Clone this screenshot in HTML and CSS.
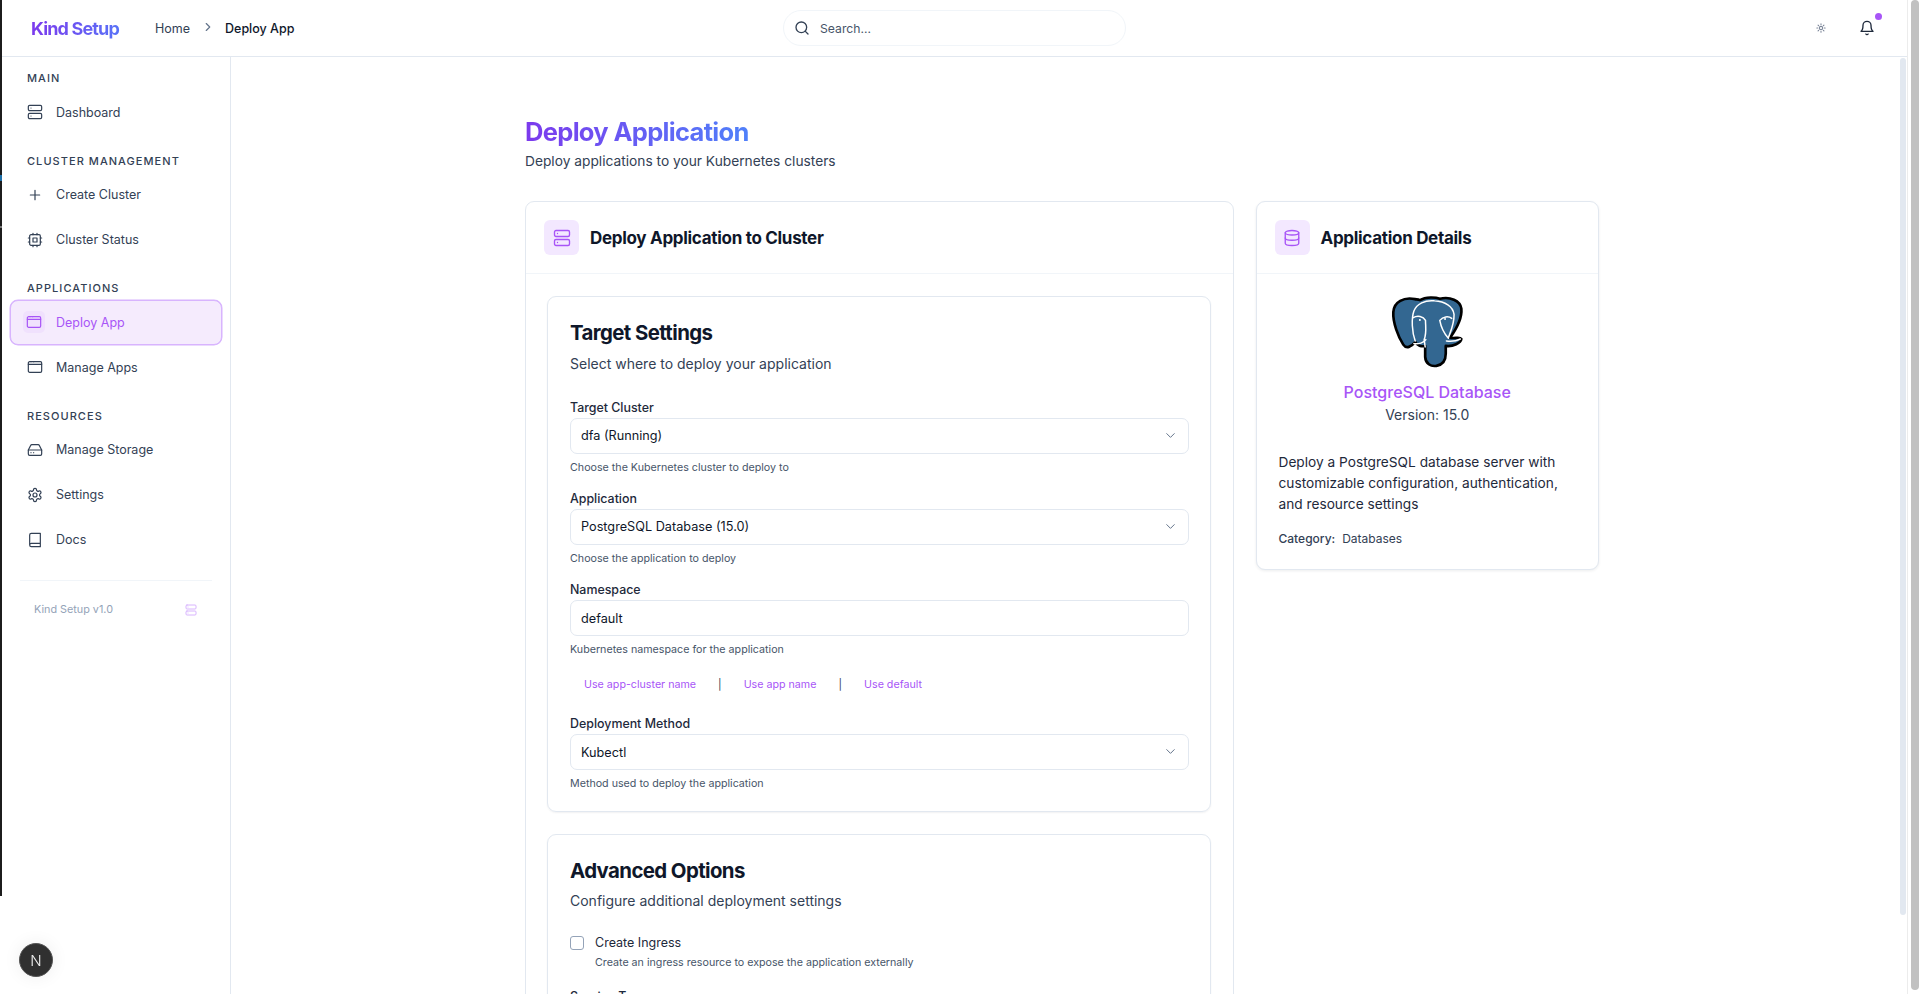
FILE: index.html
```html
<!DOCTYPE html>
<html lang="en">
<head>
<meta charset="utf-8">
<title>Deploy App - Kind Setup</title>
<link rel="stylesheet" href="styles.css">
</head>
<body>
<svg class="sprite" aria-hidden="true">
  <symbol id="i-server" viewBox="0 0 24 24"><rect x="2" y="2" width="20" height="8" rx="2"/><rect x="2" y="14" width="20" height="8" rx="2"/><path d="M6 6h.01M6 18h.01"/></symbol>
  <symbol id="i-plus" viewBox="0 0 24 24"><path d="M5 12h14M12 5v14"/></symbol>
  <symbol id="i-cpu" viewBox="0 0 24 24"><rect x="4" y="4" width="16" height="16" rx="2"/><rect x="9" y="9" width="6" height="6"/><path d="M15 2v2M15 20v2M2 15h2M2 9h2M20 15h2M20 9h2M9 2v2M9 20v2"/></symbol>
  <symbol id="i-window" viewBox="0 0 24 24"><rect x="2" y="4" width="20" height="16" rx="2"/><path d="M2 8h20M6 4v.01M10 4v.01"/></symbol>
  <symbol id="i-drive" viewBox="0 0 24 24"><path d="M22 12H2"/><path d="M5.45 5.11 2 12v6a2 2 0 0 0 2 2h16a2 2 0 0 0 2-2v-6l-3.45-6.89A2 2 0 0 0 16.76 4H7.24a2 2 0 0 0-1.79 1.11z"/><path d="M6 16h.01M10 16h.01"/></symbol>
  <symbol id="i-gear" viewBox="0 0 24 24"><path d="M12.22 2h-.44a2 2 0 0 0-2 2v.18a2 2 0 0 1-1 1.73l-.43.25a2 2 0 0 1-2 0l-.15-.08a2 2 0 0 0-2.73.73l-.22.38a2 2 0 0 0 .73 2.73l.15.1a2 2 0 0 1 1 1.72v.51a2 2 0 0 1-1 1.74l-.15.09a2 2 0 0 0-.73 2.73l.22.38a2 2 0 0 0 2.73.73l.15-.08a2 2 0 0 1 2 0l.43.25a2 2 0 0 1 1 1.73V20a2 2 0 0 0 2 2h.44a2 2 0 0 0 2-2v-.18a2 2 0 0 1 1-1.73l.43-.25a2 2 0 0 1 2 0l.15.08a2 2 0 0 0 2.73-.73l.22-.39a2 2 0 0 0-.73-2.73l-.15-.08a2 2 0 0 1-1-1.74v-.5a2 2 0 0 1 1-1.74l.15-.09a2 2 0 0 0 .73-2.73l-.22-.38a2 2 0 0 0-2.73-.73l-.15.08a2 2 0 0 1-2 0l-.43-.25a2 2 0 0 1-1-1.73V4a2 2 0 0 0-2-2z"/><circle cx="12" cy="12" r="3"/></symbol>
  <symbol id="i-book" viewBox="0 0 24 24"><path d="M4 19.5v-15A2.5 2.5 0 0 1 6.5 2H20v20H6.5a2.5 2.5 0 0 1 0-5H20"/></symbol>
  <symbol id="i-db" viewBox="0 0 24 24"><ellipse cx="12" cy="5" rx="9" ry="3"/><path d="M3 5V19A9 3 0 0 0 21 19V5"/><path d="M3 12A9 3 0 0 0 21 12"/></symbol>
  <symbol id="i-search" viewBox="0 0 24 24"><circle cx="11" cy="11" r="8"/><path d="m21 21-4.3-4.3"/></symbol>
  <symbol id="i-down" viewBox="0 0 24 24"><path d="m6 9 6 6 6-6"/></symbol>
  <symbol id="i-right" viewBox="0 0 24 24"><path d="m9 18 6-6-6-6"/></symbol>
  <symbol id="i-bell" viewBox="0 0 24 24"><path d="M6 8a6 6 0 0 1 12 0c0 7 3 9 3 9H3s3-2 3-9"/><path d="M10.3 21a1.94 1.94 0 0 0 3.4 0"/></symbol>
  <symbol id="i-sun" viewBox="0 0 24 24"><circle cx="12" cy="12" r="4"/><path d="M12 2v2M12 20v2M4.93 4.93l1.41 1.41M17.66 17.66l1.41 1.41M2 12h2M20 12h2M6.34 17.66l-1.41 1.41M19.07 4.93l-1.41 1.41"/></symbol>
</svg>

<div class="desk-strip"></div>

<div class="app">
  <header class="topbar">
    <a class="brand">Kind Setup</a>
    <nav class="crumbs">
      <span class="crumb">Home</span>
      <svg class="ico crumb-sep"><use href="#i-right"/></svg>
      <span class="crumb crumb-current">Deploy App</span>
    </nav>
    <label class="search">
      <svg class="ico search-ico"><use href="#i-search"/></svg>
      <input class="search-input" type="text" placeholder="Search...">
    </label>
    <div class="top-actions">
      <svg class="ico sun"><use href="#i-sun"/></svg>
      <span class="bell-wrap">
        <svg class="ico bell"><use href="#i-bell"/></svg>
        <span class="bell-dot"></span>
      </span>
    </div>
  </header>

  <div class="workspace">
    <aside class="sidebar">
      <h4 class="side-title side-title-first">MAIN</h4>
      <a class="side-item"><svg class="ico side-ico"><use href="#i-server"/></svg>Dashboard</a>
      <h4 class="side-title">CLUSTER MANAGEMENT</h4>
      <a class="side-item"><svg class="ico side-ico"><use href="#i-plus"/></svg>Create Cluster</a>
      <a class="side-item"><svg class="ico side-ico"><use href="#i-cpu"/></svg>Cluster Status</a>
      <h4 class="side-title">APPLICATIONS</h4>
      <a class="side-item side-item-active"><span class="side-ico-box"><svg class="ico side-ico"><use href="#i-window"/></svg></span>Deploy App</a>
      <a class="side-item"><svg class="ico side-ico"><use href="#i-window"/></svg>Manage Apps</a>
      <h4 class="side-title">RESOURCES</h4>
      <a class="side-item"><svg class="ico side-ico"><use href="#i-drive"/></svg>Manage Storage</a>
      <a class="side-item"><svg class="ico side-ico"><use href="#i-gear"/></svg>Settings</a>
      <a class="side-item"><svg class="ico side-ico"><use href="#i-book"/></svg>Docs</a>
      <div class="side-foot">
        <span>Kind Setup v1.0</span>
        <svg class="ico foot-ico"><use href="#i-server"/></svg>
      </div>
    </aside>

    <main class="main">
      <div class="content">
        <h1 class="page-title">Deploy Application</h1>
        <p class="page-sub">Deploy applications to your Kubernetes clusters</p>
        <div class="columns">
          <section class="card card-form">
            <div class="card-head">
              <span class="head-ico"><svg class="ico"><use href="#i-server"/></svg></span>
              <h2 class="card-title">Deploy Application to Cluster</h2>
            </div>
            <div class="card-body">
              <div class="panel">
                <h3 class="panel-title">Target Settings</h3>
                <p class="panel-sub">Select where to deploy your application</p>
                <div class="field">
                  <label class="label">Target Cluster</label>
                  <div class="select-wrap">
                    <select class="control"><option>dfa (Running)</option></select>
                    <svg class="ico select-ico"><use href="#i-down"/></svg>
                  </div>
                  <p class="hint">Choose the Kubernetes cluster to deploy to</p>
                </div>
                <div class="field">
                  <label class="label">Application</label>
                  <div class="select-wrap">
                    <select class="control"><option>PostgreSQL Database (15.0)</option></select>
                    <svg class="ico select-ico"><use href="#i-down"/></svg>
                  </div>
                  <p class="hint">Choose the application to deploy</p>
                </div>
                <div class="field field-links">
                  <label class="label">Namespace</label>
                  <input class="control" type="text" value="default">
                  <p class="hint">Kubernetes namespace for the application</p>
                  <div class="quick-links">
                    <a class="quick">Use app-cluster name</a>
                    <span class="quick-sep">|</span>
                    <a class="quick">Use app name</a>
                    <span class="quick-sep">|</span>
                    <a class="quick">Use default</a>
                  </div>
                </div>
                <div class="field field-last">
                  <label class="label">Deployment Method</label>
                  <div class="select-wrap">
                    <select class="control"><option>Kubectl</option></select>
                    <svg class="ico select-ico"><use href="#i-down"/></svg>
                  </div>
                  <p class="hint">Method used to deploy the application</p>
                </div>
              </div>
              <div class="panel panel-advanced">
                <h3 class="panel-title">Advanced Options</h3>
                <p class="panel-sub">Configure additional deployment settings</p>
                <div class="check-row">
                  <input class="check" type="checkbox">
                  <div>
                    <div class="check-label">Create Ingress</div>
                    <p class="check-hint">Create an ingress resource to expose the application externally</p>
                  </div>
                </div>
                <label class="label label-service">Service Type</label>
              </div>
            </div>
          </section>

          <section class="card card-details">
            <div class="card-head">
              <span class="head-ico"><svg class="ico"><use href="#i-db"/></svg></span>
              <h2 class="card-title">Application Details</h2>
            </div>
            <div class="details-body">
              <svg class="pg-logo" viewBox="450 314 226 222" role="img" aria-label="PostgreSQL">
                <path class="pg-shape" d="M525 326C492 319 462 334 460 365C458 396 475 440 490 463C499 477 514 470 526 455C532 466 545 470 556 467L556 500C557 520 573 530 590 527C609 524 618 511 618 490L618 467C640 470 664 458 665 446C660 438 645 446 631 442C648 418 668 386 665 355C662 330 630 317 600 325C588 320 558 318 540 329C535 327 530 327 525 326Z"/>
                <path class="pg-line" d="M526 452C516 425 514 385 522 362C530 340 556 328 584 331C616 333 640 348 643 372C644 398 634 420 626 442"/>
                <path class="pg-line" d="M522 460C536 462 552 458 558 448M620 452C634 454 650 452 662 446"/>
                <path class="pg-line" d="M520 382C533 374 550 378 557 390C557 410 561 428 553 448L556 470M600 390C610 378 626 376 636 384M600 390C604 412 612 428 626 444"/>
                <circle class="pg-eye" cx="540" cy="389" r="3"/>
                <circle class="pg-eye" cx="616" cy="386" r="3"/>
              </svg>
              <h3 class="app-name">PostgreSQL Database</h3>
              <p class="app-version">Version: 15.0</p>
              <p class="app-desc">Deploy a PostgreSQL database server with customizable configuration, authentication, and resource settings</p>
              <p class="app-cat"><span class="cat-key">Category:</span>Databases</p>
            </div>
          </section>
        </div>
      </div>
    </main>

    <div class="inner-scroll"><span class="inner-thumb"></span></div>
  </div>
</div>

<div class="page-scroll"><span class="page-thumb"></span></div>

<button class="next-badge" type="button">N</button>
</body>
</html>
```

FILE: styles.css
```css
* { box-sizing: border-box; }

html, body { height: 100%; }

body {
  margin: 0;
  height: 994px;
  display: flex;
  overflow: hidden;
  background: #fff;
  color: #0f172a;
  font-family: Inter, "Liberation Sans", sans-serif;
}

h1, h2, h3, h4, p { margin: 0; }

.sprite { display: none; }

.ico {
  display: block;
  width: 16px;
  height: 16px;
  fill: none;
  stroke: currentColor;
  stroke-width: 2;
  stroke-linecap: round;
  stroke-linejoin: round;
  flex: none;
}

.desk-strip {
  width: 2px;
  height: 896px;
  flex: none;
  background: linear-gradient(#1c1c1c 0 175px, #1d6fa8 175px 181px, #1c1c1c 181px 226px, #777 226px 228px, #1c1c1c 228px);
}

.app {
  flex: 1;
  min-width: 0;
  display: flex;
  flex-direction: column;
}

/* top bar */
.topbar {
  height: 57px;
  flex: none;
  display: flex;
  align-items: center;
  border-bottom: 1px solid #e2e8f0;
  padding-left: 29px;
  position: relative;
}

.brand {
  width: 124px;
  font-size: 18px;
  font-weight: 650;
  letter-spacing: -0.85px;
  background: linear-gradient(90deg, #7c3aed, #4f80fa 90%);
  -webkit-background-clip: text;
  background-clip: text;
  color: transparent;
}

.crumbs {
  display: flex;
  align-items: center;
  font-size: 12.5px;
  color: #334155;
  width: 628px;
}

.crumb-sep {
  width: 14px;
  height: 14px;
  margin: -2px 10px 0 11px;
  color: #64748b;
}

.crumb-current {
  color: #0f172a;
  font-weight: 450;
}

.search {
  width: 343px;
  height: 36px;
  flex: none;
  display: flex;
  align-items: center;
  gap: 10px;
  padding-left: 10px;
  border: 1px solid #f1f5f9;
  border-radius: 18px;
}

.search-ico {
  width: 16px;
  height: 16px;
  color: #334155;
}

.search-input {
  flex: 1;
  min-width: 0;
  border: 0;
  outline: 0;
  padding: 0;
  background: none;
  font: 400 12.2px Inter, "Liberation Sans", sans-serif;
}

.search-input::placeholder { color: #475569; opacity: 1; }

.top-actions {
  flex: 1;
  display: flex;
  align-items: center;
  justify-content: flex-end;
  gap: 33px;
  padding-right: 32px;
}

.sun {
  width: 10px;
  height: 10px;
  color: #7c8699;
  stroke-width: 2.6;
}

.bell-wrap { position: relative; display: block; }

.bell { color: #1e293b; }

.bell-dot {
  position: absolute;
  top: -7px;
  right: -7px;
  width: 7px;
  height: 7px;
  border-radius: 50%;
  background: #a855f7;
}

/* workspace */
.workspace {
  flex: 1;
  min-height: 0;
  display: flex;
}

.sidebar {
  width: 229px;
  flex: none;
  border-right: 1px solid #e2e8f0;
  padding: 0 8px;
  font-size: 12.5px;
}

.side-title {
  height: 14px;
  margin: 19px 0 4.5px;
  padding-left: 17px;
  font-size: 11px;
  line-height: 14px;
  font-weight: 550;
  letter-spacing: 1.05px;
  color: #334155;
}

.side-title-first { margin-top: 14px; }

.side-item {
  height: 45px;
  display: flex;
  align-items: center;
  gap: 13px;
  padding-left: 17px;
  color: #334155;
  font-weight: 400;
}

.side-ico { width: 16px; height: 16px; stroke-width: 1.8; }

.side-item-active {
  margin-top: 3px;
  background: #f5ebfd;
  border: 1px solid #d8b4fe;
  box-shadow: 0 0 0 0.5px #d8b4fe;
  border-radius: 8px;
  color: #a855f7;
  padding-left: 12px;
  gap: 11px;
}

.side-ico-box {
  width: 22px;
  height: 22px;
  display: flex;
  align-items: center;
  justify-content: center;
  background: #f0e1fd;
  border-radius: 5px;
}

.side-ico-box .side-ico { width: 16px; height: 16px; }

.side-foot {
  margin: 18px 10px 0;
  padding: 22px 15px 0 14px;
  border-top: 1px solid #f1f5f9;
  display: flex;
  align-items: center;
  justify-content: space-between;
  font-size: 10.8px;
  color: #94a3b8;
}

.foot-ico {
  width: 12px;
  height: 12px;
  color: #d8b4fe;
}

/* main */
.main {
  flex: 1;
  min-width: 0;
  overflow: hidden;
}

.content {
  width: 1074px;
  margin-left: 294px;
  padding-top: 58px;
}

.page-title {
  font-size: 25.5px;
  line-height: 34px;
  font-weight: 700;
  letter-spacing: -0.68px;
  width: max-content;
  background: linear-gradient(90deg, #7c3aed, #4f80fa);
  -webkit-background-clip: text;
  background-clip: text;
  color: transparent;
}

.page-sub {
  margin-top: 2px;
  font-size: 13.75px;
  line-height: 20px;
  color: #334155;
}

.columns {
  display: flex;
  align-items: flex-start;
  gap: 21.5px;
  margin-top: 30px;
}

.card {
  background: #fff;
  border: 1px solid #e2e8f0;
  border-radius: 9px;
}

.card-form { width: 709px; flex: none; height: 900px; }

.card-details {
  flex: 1;
  height: 369px;
  box-shadow: 0 1px 3px rgba(15, 23, 42, 0.08);
}

.card-head {
  height: 72px;
  display: flex;
  align-items: center;
  gap: 11px;
  padding-left: 18px;
  border-bottom: 1px solid #f1f5f9;
}

.head-ico {
  width: 35px;
  height: 35px;
  display: flex;
  align-items: center;
  justify-content: center;
  background: #f3e8ff;
  border-radius: 6px;
  color: #a855f7;
}

.head-ico .ico { width: 18px; height: 18px; stroke-width: 1.8; }

.card-title {
  font-size: 17px;
  font-weight: 650;
  letter-spacing: -0.3px;
  color: #0f172a;
}

.card-body { padding: 22px 21px 0; }

.panel {
  height: 516px;
  width: 664px;
  padding: 22px 21px 0 22px;
  border: 1px solid #e2e8f0;
  border-radius: 9px;
  box-shadow: 0 1px 2px rgba(15, 23, 42, 0.06);
}

.panel-advanced {
  height: 300px;
  margin-top: 21.5px;
}

.panel-title {
  font-size: 20.4px;
  line-height: 28px;
  font-weight: 650;
  letter-spacing: -0.6px;
  color: #0f172a;
}

.panel-sub {
  margin-top: 6.5px;
  font-size: 14px;
  line-height: 20px;
  color: #334155;
}

.field { height: 91.3px; }
.panel-sub + .field { margin-top: 25px; }
.field-links { height: 134.4px; }
.field-last { height: auto; }

.label {
  display: block;
  height: 17px;
  margin-bottom: 2px;
  font-size: 12.4px;
  line-height: 17px;
  font-weight: 450;
  color: #1e293b;
}

.control {
  display: block;
  width: 100%;
  height: 36px;
  padding: 0 10px;
  border: 1px solid #e2e8f0;
  border-radius: 7px;
  outline: 0;
  background: #fff;
  color: #0f172a;
  font: 400 12.7px Inter, "Liberation Sans", sans-serif;
  appearance: none;
  -webkit-appearance: none;
}

.select-wrap { position: relative; }

.select-ico {
  position: absolute;
  top: 10px;
  right: 11px;
  width: 15px;
  height: 15px;
  color: #64748b;
  stroke-width: 1.6;
  pointer-events: none;
}

.hint {
  margin-top: 6px;
  font-size: 10.7px;
  line-height: 15px;
  color: #475569;
}

.quick-links {
  display: flex;
  align-items: center;
  margin-top: 20px;
  padding-left: 14px;
  font-size: 10.7px;
  font-weight: 400;
  line-height: 15px;
  color: #a855f7;
}

.quick-sep {
  margin: 0 22px;
  color: #334155;
  font-weight: 400;
}

.check-row {
  display: flex;
  gap: 11px;
  margin-top: 24px;
}

.check {
  appearance: none;
  -webkit-appearance: none;
  width: 14px;
  height: 14px;
  margin: 1px 0 0;
  border: 1px solid #94a3b8;
  border-radius: 3px;
  background: #fff;
  flex: none;
}

.check-label {
  font-size: 12.5px;
  line-height: 16px;
  font-weight: 400;
  color: #1e293b;
}

.check-hint {
  margin-top: 4px;
  font-size: 10.7px;
  line-height: 15px;
  color: #475569;
}

.label-service { margin-top: 18px; }

/* details */
.details-body {
  padding: 21px 22px 0;
  display: flex;
  flex-direction: column;
}

.pg-logo {
  display: block;
  width: 75px;
  height: 74px;
  align-self: center;
}

.pg-shape {
  fill: #336791;
  stroke: #000;
  stroke-width: 8;
  stroke-linejoin: round;
}

.pg-line {
  fill: none;
  stroke: #fff;
  stroke-width: 4.5;
  stroke-linecap: round;
  stroke-linejoin: round;
}

.pg-eye { fill: #fff; }

.app-name {
  margin-top: 12px;
  text-align: center;
  font-size: 16px;
  line-height: 22px;
  font-weight: 450;
  color: #a855f7;
}

.app-version {
  margin-top: 2px;
  text-align: center;
  font-size: 14px;
  line-height: 20px;
  color: #334155;
}

.app-desc {
  margin-top: 27px;
  font-size: 13.7px;
  line-height: 21px;
  color: #1e293b;
}

.app-cat {
  margin-top: 16px;
  font-size: 12px;
  line-height: 16px;
  color: #334155;
}

.cat-key {
  margin-right: 7px;
  font-weight: 500;
}

/* scrollbars */
.inner-scroll {
  width: 7px;
  flex: none;
  padding-top: 1px;
}

.inner-thumb {
  display: block;
  width: 6px;
  height: 857px;
  background: #e2e8f0;
  border-radius: 3px;
}

.page-scroll {
  width: 15px;
  flex: none;
  border-left: 1px solid #ececec;
  padding-left: 3px;
}

.page-thumb {
  display: block;
  width: 8px;
  height: 990px;
  background: #c1c1c1;
  border-radius: 4px;
}

/* dev badge */
.next-badge {
  position: fixed;
  left: 19px;
  top: 943px;
  width: 34px;
  height: 34px;
  padding: 0;
  border: 1px solid #555;
  border-radius: 50%;
  background: #303030;
  color: #f1f1f1;
  font: 300 15px Inter, "Liberation Sans", sans-serif;
  box-shadow: 0 0 18px rgba(0, 0, 0, 0.07);
}
```
